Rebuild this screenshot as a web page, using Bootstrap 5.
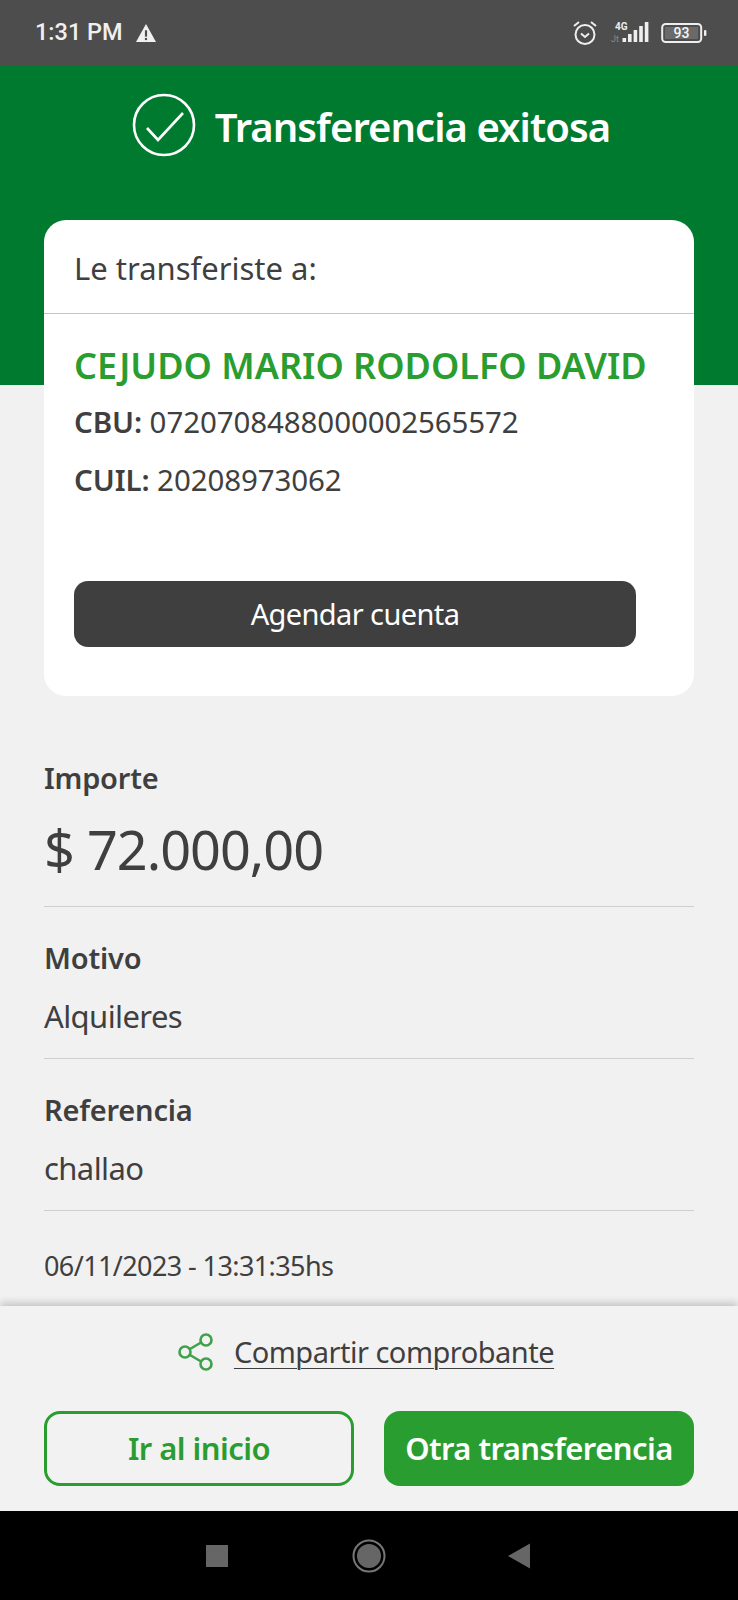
<!DOCTYPE html>
<html lang="es">
<head>
    <meta charset="UTF-8">
    <meta name="viewport" content="width=device-width, initial-scale=1.0">
    <title>Transferencia exitosa</title>
    <link href="https://cdn.jsdelivr.net/npm/bootstrap@5.3.0/dist/css/bootstrap.min.css" rel="stylesheet">
    <style>
        body {
            background: #f1f1f1;
            color: #3f3f3f;
            font-family: "Noto Sans", "Liberation Sans", sans-serif;
            height: 1600px;
            overflow: hidden;
        }
        .phone-status {
            height: 66px;
            background: #4d4d4d;
            color: #f0f0f0;
            padding: 0 31px 0 35px;
            font-family: Roboto, sans-serif;
        }
        .phone-time { font-size: 23.5px; font-weight: 500; }
        .signal-icon { margin-left: 13px; }
        .green-band { height: 319px; background: #007a2e; padding-top: 27px; }
        .title-icon { margin-right: 19px; }
        .band-title { font-size: 40px; font-weight: 600; color: #fff; letter-spacing: -.95px; line-height: 68px; margin: 0; }
        .receiver-card {
            margin: -165px 44px 0;
            height: 476px;
            border: 0;
            border-radius: 22px;
        }
        .receiver-head {
            height: 94px;
            padding: 3px 30px 0;
            font-size: 31px;
            border-bottom: 1px solid #c4c4c4;
        }
        .receiver-body { padding: 29px 30px 0; }
        .receiver-name { font-size: 36px; font-weight: 600; color: #2a9d31; line-height: 46px; white-space: nowrap; }
        .receiver-line { font-size: 29.5px; line-height: 38px; margin-top: 20px; letter-spacing: -.1px; }
        .receiver-name + .receiver-line { margin-top: 14px; }
        .receiver-line b { font-weight: 600; }
        .agenda-btn {
            display: block;
            width: 562px;
            height: 66px;
            margin-top: 82px;
            background: #3f3f3f;
            color: #fff;
            border: 0;
            border-radius: 14px;
            font-size: 29px;
            letter-spacing: -.6px;
        }
        .detail-list { margin: 0 44px; padding-top: 60px; }
        .detail-row { border-bottom: 1px solid #cfcfcf; padding-bottom: 21px; margin-bottom: 29px; }
        .detail-row:last-child { border: 0; margin: 0; padding-top: 6px; }
        .detail-label { font-size: 29px; font-weight: 600; line-height: 44px; letter-spacing: -.2px; }
        .detail-value { font-size: 31px; line-height: 42px; margin-top: 15px; letter-spacing: -.6px; }
        .detail-amount { font-size: 54px; line-height: 66px; margin-top: 16px; margin-bottom: 3px; letter-spacing: -1px; }
        .detail-date { font-size: 27px; line-height: 40px; letter-spacing: -.6px; }
        .action-foot {
            position: absolute;
            left: 0;
            right: 0;
            top: 1306px;
            height: 205px;
            background: #f2f2f2;
            box-shadow: 0 -3px 8px rgba(0, 0, 0, .2);
            padding: 0 44px;
        }
        .share-link { height: 105px; padding: 0 6px 13px 0; color: #3f3f3f; font-size: 29px; letter-spacing: -.5px; }
        .share-link a { color: inherit; text-underline-offset: 5px; text-decoration-thickness: 1px; }
        .share-icon { margin-right: 20px; }
        .foot-btn {
            width: 310px;
            height: 75px;
            padding: 0;
            border-radius: 16px;
            font-size: 31px;
            font-weight: 600;
            letter-spacing: -.55px;
            white-space: nowrap;
        }
        .foot-btn-outline { border: 3px solid #2a9d31; color: #2a9d31; background: transparent; }
        .foot-btn-solid { border: 0; color: #fff; background: #2a9d31; }
        .android-nav {
            position: absolute;
            left: 0;
            right: 0;
            top: 1511px;
            height: 89px;
            background: #000;
        }
    </style>
</head>
<body>
    <div class="phone-status d-flex align-items-center justify-content-between">
        <div class="d-flex align-items-center gap-2">
            <span class="phone-time">1:31 PM</span>
            <svg width="22" height="20" viewBox="0 0 24 22" class="ms-1">
                <path d="M12 1 L23 21 H1 Z" fill="#f0f0f0"/>
                <rect x="10.8" y="8" width="2.4" height="7" fill="#4d4d4d"/>
                <rect x="10.8" y="16.4" width="2.4" height="2.4" fill="#4d4d4d"/>
            </svg>
        </div>
        <div class="d-flex align-items-center">
            <svg width="26" height="26" viewBox="0 0 26 26" fill="none" stroke="#eee" stroke-width="2">
                <circle cx="13" cy="14.5" r="9.5"/>
                <path d="M9 13.5 L13 17 L17 13.5"/>
                <path d="M2 6 L7 2 M24 6 L19 2"/>
            </svg>
            <svg width="42" height="24" viewBox="0 0 42 24" class="signal-icon">
                <text x="4" y="9" font-size="10" font-weight="700" fill="#eee" font-family="Roboto, sans-serif">4G</text>
                <text x="0" y="21" font-size="9" fill="#888" font-family="Roboto, sans-serif">Jt</text>
                <rect x="11.5" y="17" width="3.6" height="4" fill="#eee"/>
                <rect x="17" y="13" width="3.6" height="8" fill="#eee"/>
                <rect x="22.6" y="9" width="3.6" height="12" fill="#eee"/>
                <rect x="28.2" y="5" width="3.6" height="16" fill="#eee"/>
                <rect x="33.8" y="1" width="3.6" height="20" fill="#eee"/>
            </svg>
            <svg width="46" height="22" viewBox="0 0 46 22" class="ms-2">
                <rect x="1.2" y="2" width="39" height="18" rx="3.5" fill="none" stroke="#eee" stroke-width="2"/>
                <rect x="4" y="5" width="33" height="12" fill="#6a6a6a"/>
                <text x="20.5" y="16" text-anchor="middle" font-size="14" font-weight="500" fill="#f5f5f5" font-family="Roboto, sans-serif">93</text>
                <rect x="43" y="8" width="2.4" height="6" rx="1" fill="#eee"/>
            </svg>
        </div>
    </div>

    <div class="green-band d-flex justify-content-center align-items-start">
        <div class="d-flex align-items-center ps-1">
            <svg width="64" height="64" viewBox="0 0 64 64" fill="none" stroke="#fff" class="title-icon mb-1">
                <circle cx="32" cy="32" r="30" stroke-width="2.6"/>
                <path d="M15 35 L26 47 L51 20" stroke-width="2.6"/>
            </svg>
            <h1 class="band-title">Transferencia exitosa</h1>
        </div>
    </div>

    <div class="card receiver-card">
        <div class="receiver-head d-flex align-items-center">Le transferiste a:</div>
        <div class="receiver-body">
            <div class="receiver-name">CEJUDO MARIO RODOLFO DAVID</div>
            <div class="receiver-line"><b>CBU:</b> 0720708488000002565572</div>
            <div class="receiver-line"><b>CUIL:</b> 20208973062</div>
            <button class="btn agenda-btn">Agendar cuenta</button>
        </div>
    </div>

    <div class="detail-list">
        <div class="detail-row">
            <div class="detail-label">Importe</div>
            <div class="detail-amount">$ 72.000,00</div>
        </div>
        <div class="detail-row">
            <div class="detail-label">Motivo</div>
            <div class="detail-value">Alquileres</div>
        </div>
        <div class="detail-row">
            <div class="detail-label">Referencia</div>
            <div class="detail-value">challao</div>
        </div>
        <div class="detail-row">
            <div class="detail-date">06/11/2023 - 13:31:35hs</div>
        </div>
    </div>

    <div class="action-foot">
        <div class="share-link d-flex align-items-center justify-content-center">
            <svg width="36" height="38" viewBox="0 0 36 38" fill="none" stroke="#3fa14a" stroke-width="2.6" class="share-icon">
                <circle cx="7" cy="19" r="5.5"/>
                <circle cx="28" cy="7" r="5.5"/>
                <circle cx="28" cy="31" r="5.5"/>
                <path d="M12 16 L23 9.5 M12 22 L23 28.5"/>
            </svg>
            <a href="#">Compartir comprobante</a>
        </div>
        <div class="d-flex justify-content-between">
            <button class="btn foot-btn foot-btn-outline">Ir al inicio</button>
            <button class="btn foot-btn foot-btn-solid">Otra transferencia</button>
        </div>
    </div>

    <div class="android-nav d-flex align-items-center justify-content-center">
        <svg width="340" height="46" viewBox="0 0 340 46">
            <rect x="7" y="12" width="22" height="22" fill="#666"/>
            <circle cx="170" cy="23" r="15.5" fill="none" stroke="#777" stroke-width="2"/>
            <circle cx="170" cy="23" r="12" fill="#666"/>
            <path d="M331 10.5 V35.5 L309 23 Z" fill="#666"/>
        </svg>
    </div>

    <script src="https://cdn.jsdelivr.net/npm/bootstrap@5.3.0/dist/js/bootstrap.bundle.min.js"></script>
</body>
</html>
